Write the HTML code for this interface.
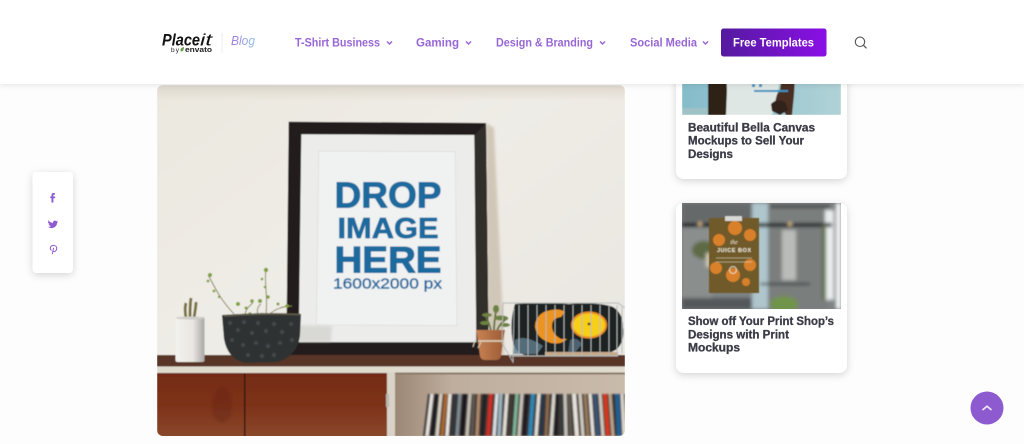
<!DOCTYPE html>
<html lang="en"><head><meta charset="utf-8"><title>Placeit Blog</title>
<style>
html,body{margin:0;padding:0;width:1024px;height:444px;overflow:hidden;background:#fdfdfd}
svg{display:block;font-family:"Liberation Sans",sans-serif}
.n{font-size:11.5px;font-weight:700;fill:#9767d6}
.t{font-size:11.5px;font-weight:700;fill:#3b3b47;stroke:#3b3b47;stroke-width:.3px}
</style></head><body>
<svg xmlns="http://www.w3.org/2000/svg" width="1024" height="444" viewBox="0 0 1024 444">
<defs>
<filter id="s" x="-30%" y="-30%" width="160%" height="160%"><feDropShadow dx="0" dy="2" stdDeviation="4" flood-color="#000" flood-opacity=".16"/></filter>
<filter id="h" x="-5%" y="-20%" width="110%" height="150%"><feDropShadow dx="0" dy="1" stdDeviation="3" flood-color="#000" flood-opacity=".1"/></filter>
<filter id="b3"><feGaussianBlur stdDeviation="1.800"/></filter>
<filter id="b1"><feGaussianBlur stdDeviation="1.400"/></filter>
<filter id="b6"><feGaussianBlur stdDeviation=".7"/></filter>
<filter id="b"><feGaussianBlur stdDeviation=".45"/></filter>
<linearGradient id="wall" x1="0" y1="0" x2="1" y2="1"><stop offset="0" stop-color="#ebe8df"/><stop offset=".4" stop-color="#efece6"/><stop offset="1" stop-color="#e8e5e0"/></linearGradient>
<linearGradient id="wt" x1="0" y1="0" x2="0" y2="1"><stop offset="0" stop-color="#ded8cd"/><stop offset="1" stop-color="#ded8cd" stop-opacity="0"/></linearGradient>
<linearGradient id="btn" x1="0" y1="0" x2="1" y2="0"><stop offset="0" stop-color="#541a9e"/><stop offset="1" stop-color="#8a0fe6"/></linearGradient>
<linearGradient id="blog" x1="0" y1="0" x2="1" y2="0"><stop offset="0" stop-color="#a678dc"/><stop offset="1" stop-color="#8fc4f0"/></linearGradient>
<linearGradient id="wood" x1="0" y1="0" x2="0" y2="1"><stop offset="0" stop-color="#752c14"/><stop offset=".5" stop-color="#7d3219"/><stop offset="1" stop-color="#8a482b"/></linearGradient>
<linearGradient id="inner" x1="0" y1="0" x2="1" y2="0"><stop offset="0" stop-color="#9c8775"/><stop offset=".25" stop-color="#bfae9e"/><stop offset="1" stop-color="#c9bbab"/></linearGradient>
<linearGradient id="can" x1="0" y1="0" x2="1" y2="0"><stop offset="0" stop-color="#f4f2ee"/><stop offset=".6" stop-color="#e9e6e2"/><stop offset="1" stop-color="#aaa8a4"/></linearGradient>
<linearGradient id="terra" x1="0" y1="0" x2="1" y2="0"><stop offset="0" stop-color="#c98355"/><stop offset="1" stop-color="#9b5a34"/></linearGradient>
<linearGradient id="sea" x1="0" y1="0" x2="1" y2="0"><stop offset="0" stop-color="#85bccb"/><stop offset="1" stop-color="#b0d2d6"/></linearGradient>
<clipPath id="mc"><rect x="157" y="85" width="468" height="351" rx="6"/></clipPath>
<clipPath id="c1"><rect x="682" y="60" width="159" height="55"/></clipPath>
<clipPath id="c2"><rect x="682" y="203" width="159" height="106"/></clipPath>
</defs>

<rect width="1024" height="444" fill="#fdfdfd"/>

<!-- main image -->
<g clip-path="url(#mc)"><g filter="url(#b)">
<rect x="157" y="85" width="468" height="351" fill="url(#wall)"/>
<rect x="157" y="85" width="468" height="16" fill="url(#wt)"/>
<polygon points="486,123 494,128 504,340 504,355 488,355" fill="#cbbfae" opacity=".8" filter="url(#b1)"/>
<!-- frame -->
<polygon points="288.700,121.700 486,123 488.700,355 286.300,355" fill="#211e1c"/>
<polygon points="474.300,135 486,123 488.700,355 476.300,342.300" fill="#302d2a"/>
<polygon points="301.300,134.300 474.300,135 476.300,342.300 298.700,342.300" fill="#ecedea"/>
<polygon points="318.700,151 455.300,151.700 457,325.700 316.300,325" fill="#f0f1f1" stroke="#d8d8d6" stroke-width=".6"/>
<polygon points="299,325 332,326 331,342 299,342" fill="#c9c8c5" opacity=".55" filter="url(#b1)"/>
<g fill="#1f6a9e" stroke="#1f6a9e" font-weight="700">
<text x="334.500" y="207.500" font-size="36" stroke-width=".9" textLength="107" lengthAdjust="spacingAndGlyphs">DROP</text>
<text x="337.500" y="238" font-size="29" stroke-width=".7" textLength="101" lengthAdjust="spacingAndGlyphs">IMAGE</text>
<text x="334.500" y="272.500" font-size="37" stroke-width="1.100" textLength="107" lengthAdjust="spacingAndGlyphs">HERE</text>
<text x="333" y="288.500" font-size="15" font-weight="400" stroke-width=".4" textLength="109" lengthAdjust="spacingAndGlyphs">1600x2000 px</text>
</g>
<!-- shelf -->
<rect x="157" y="355" width="468" height="12" fill="#593527"/>
<rect x="157" y="366.500" width="468" height="6" fill="#dfdbcf"/>
<rect x="157" y="372.500" width="468" height="64" fill="#d8d3c6"/>
<rect x="157" y="373" width="87" height="64" fill="url(#wood)"/>
<rect x="245.500" y="373" width="141.500" height="64" fill="url(#wood)"/>
<rect x="244" y="373" width="1.500" height="64" fill="#2e1509"/>
<ellipse cx="222" cy="405" rx="10" ry="18" fill="#5e2412" opacity=".3" filter="url(#b1)"/>
<rect x="386" y="394" width="3" height="13" fill="#b9b8b0"/>
<rect x="395" y="372.500" width="230" height="64" fill="url(#inner)"/>
<rect x="395" y="372.500" width="230" height="2" fill="#8b7968"/>
<!-- books -->
<g filter="url(#b6)">
<polygon points="423,436 428,394 625,394 625,436" fill="#3a3230"/>
<g stroke-width="3.200">
<path d="M427 436l5-42" stroke="#e8e6e0"/><path d="M432 436l5-42" stroke="#1f1f22"/><path d="M437 436l4-42" stroke="#d9d3c4"/><path d="M442 436l4-42" stroke="#b0692c"/><path d="M447 436l3-42" stroke="#ece9e2"/><path d="M452 436l4-42" stroke="#30343a"/><path d="M457 436l3-42" stroke="#7f8d92"/><path d="M462 436l3-42" stroke="#17191c"/><path d="M467 436l3-42" stroke="#c5c0b5"/><path d="M472 436l2-42" stroke="#5d5750"/><path d="M477 436l2-42" stroke="#b08a6c"/><path d="M482 436l3-42" stroke="#202226"/><path d="M488 436l3-42" stroke="#cf2d22" stroke-width="4"/><path d="M494 436l3-42" stroke="#dfe3e6"/><path d="M499 436l2-42" stroke="#9fb8c4"/><path d="M504 436l3-42" stroke="#e6e2da"/><path d="M509 436l2-42" stroke="#403a34"/><path d="M514 436l3-42" stroke="#7fb69a"/><path d="M519 436l3-42" stroke="#c9c4ba"/><path d="M524 436l3-42" stroke="#1a1c20"/><path d="M530 436l3-42" stroke="#2f86b2" stroke-width="4"/><path d="M536 436l3-42" stroke="#e4e0d8"/><path d="M541 436l2-42" stroke="#26384a"/><path d="M546 436l2-42" stroke="#8a6a4e"/><path d="M551 436l3-42" stroke="#dcd8d0"/><path d="M556 436l1-42" stroke="#1d1e20"/><path d="M561 436l0-42" stroke="#383a3a"/><path d="M566 436l-1-42" stroke="#c9c4bb"/><path d="M571 436l-2-42" stroke="#5f5a52"/><path d="M577 436l-3-42" stroke="#e8e5de" stroke-width="4"/><path d="M583 436l-3-42" stroke="#d3cec4"/><path d="M588 436l-3-42" stroke="#9a7a5c"/><path d="M593 436l-3-42" stroke="#e6e4dc"/><path d="M598 436l-3-42" stroke="#38567a"/><path d="M603 436l-3-42" stroke="#cfcabf"/><path d="M608 436l-3-42" stroke="#d8391f" stroke-width="4"/><path d="M613 436l-3-42" stroke="#b9a48c"/><path d="M619 436l-2-42" stroke="#1f6294" stroke-width="4"/><path d="M624 436l-2-42" stroke="#dbd7cf"/>
</g>
</g>
<!-- can -->
<path d="M186 318c-1-6-1-12 0-15M190 318c0-8 0-14 1-20M194 318c1-6 2-12 2-16" stroke="#77703f" stroke-width="2.800" fill="none"/>
<rect x="175.500" y="317" width="29" height="45" rx="2" fill="url(#can)"/>
<ellipse cx="190" cy="318" rx="14.500" ry="1.500" fill="#cfcdc8"/>
<!-- plant -->
<g fill="none" stroke="#7b7a4c" stroke-width=".9">
<path d="M208 275c5 8 10 22 26 39"/><path d="M266 268c-2 14 2 30 0 46"/><path d="M245 314c2-8 6-8 8-12M258 314c-2-4 1-9 3-10M270 314c4-4 12-8 22-8"/>
</g>
<g fill="#7ea03f">
<circle cx="210" cy="275" r="2"/><circle cx="208" cy="281" r="1.400"/><circle cx="214" cy="291" r="1.400"/><circle cx="219" cy="297" r="1.200"/><circle cx="238" cy="304" r="2"/><circle cx="246" cy="308" r="1.500"/><circle cx="266" cy="270" r="2.200"/><circle cx="262" cy="279" r="1.300"/><circle cx="265" cy="287" r="1.300"/><circle cx="252" cy="301" r="1.800"/><circle cx="260" cy="301" r="2"/><circle cx="268" cy="297" r="1.800"/><circle cx="278" cy="304" r="1.500"/><circle cx="287" cy="306" r="1.800"/><circle cx="250" cy="314" r="1.800"/><circle cx="262" cy="315" r="2.200"/>
</g>
<!-- pot -->
<path d="M222 315q40-3 79-1l-1 22q-3 20-22 26l-32 1q-18-3-22-24z" fill="#2e3133"/>
<path d="M224 316q37-3 76-1.500" stroke="#5e5a48" stroke-width="1.800" fill="none"/>
<g filter="url(#b6)" fill="#4d5154"><circle cx="230" cy="323" r="1.800"/><circle cx="238" cy="330" r="1.800"/><circle cx="244" cy="322" r="1.800"/><circle cx="252" cy="333" r="1.800"/><circle cx="258" cy="323" r="1.800"/><circle cx="266" cy="331" r="1.800"/><circle cx="274" cy="324" r="1.800"/><circle cx="282" cy="332" r="1.800"/><circle cx="291" cy="324" r="1.800"/><circle cx="232" cy="340" r="1.800"/><circle cx="243" cy="345" r="1.800"/><circle cx="256" cy="343" r="1.800"/><circle cx="268" cy="346" r="1.800"/><circle cx="280" cy="343" r="1.800"/><circle cx="292" cy="340" r="1.800"/><circle cx="248" cy="355" r="1.800"/><circle cx="262" cy="356" r="1.800"/><circle cx="274" cy="355" r="1.800"/></g>
<!-- terracotta -->
<path d="M491 331c-1-6-3-10-5-14M494 331c0-8 1-14 2-20M497 331c2-6 5-9 11-13" stroke="#64703f" stroke-width="1.800" fill="none"/>
<g fill="#6d8243"><ellipse cx="487" cy="315" rx="5" ry="2"/><ellipse cx="501" cy="318" rx="7" ry="2.500"/><ellipse cx="485" cy="323" rx="5" ry="2"/><ellipse cx="496" cy="309" rx="3" ry="4"/><ellipse cx="505" cy="325" rx="5" ry="2"/></g>
<path d="M476 330h29l-1 5-3 21q-1 4-5 4h-11q-4 0-5-4l-3-21z" fill="url(#terra)"/>
<path d="M478 341h26" stroke="#d9ccb4" stroke-width="1.800"/>
<path d="M475 340l-2 7M481 342l-3 6" stroke="#d9ccb4" stroke-width="1"/>
<!-- records -->
<path d="M515 304q30-2 54 0q30-2 44 3q10 6 10 20q2 14-6 22q-10 7-30 6h-60q-10 0-14-12q-4-20 2-39z" fill="#1f2024"/>
<path d="M515 340q10-6 28 6l-6 8h-24z" fill="#5f7f90" opacity=".8"/>
<path d="M570 340q6-4 12 4l-8 10h-6z" fill="#5f7f90" opacity=".7"/>
<path d="M544 312q14-5 21 0l-4 5q-9 1-9 9 0 8 9 13l6 0q-6 6-16 4-14-4-16-16 0-10 9-15z" fill="#ec9422"/>
<ellipse cx="589" cy="325" rx="17" ry="12.500" fill="#f6cf15" stroke="#ee9020" stroke-width="2"/>
<circle cx="589" cy="324" r="1.400" fill="#54401c"/>
<rect x="545" y="352" width="73" height="4" fill="#c6a98a"/>
<g stroke="#b4b8b5" stroke-width=".9" fill="none">
<path d="M503 303h115l7 5M503 303l-1 40 11 19 1-54M622 307v46"/>
<path d="M519 305v51M528 305v51M537 305v51M546 305v51M555 305v51M564 305v51M573 305v51M582 305v51M591 305v51M600 305v51M609 305v51M617 305v51"/>
<path d="M510 356h108"/>
</g>
</g></g>

<!-- card 1 -->
<rect x="676" y="40" width="171" height="139" rx="8" fill="#fff" filter="url(#s)"/>
<g clip-path="url(#c1)"><g filter="url(#b)">
<rect x="682" y="60" width="159" height="55" fill="url(#sea)"/>
<path d="M708 60h18l1 30v25h-19z" fill="#2d2019"/>
<path d="M796 60h-12l-4 30-8 12 8 2 6 11h6l2-20z" fill="#4a2f22"/>
<path d="M726 60h58l-6 30 -6 25h-46l1-25z" fill="#dfe7e5"/>
<g fill="#3e92c0"><rect x="752" y="84" width="3" height="3"/><rect x="759" y="84" width="3" height="3"/><rect x="754" y="90" width="34" height="2"/></g>
<path d="M771 104q6-6 14-2l3 8-8 5-8-4z" fill="#33211a"/>
<path d="M682 108h26v7h-26z" fill="#9ec2c6"/>
</g></g>
<text class="t"><tspan x="688" y="131.500" textLength="127" lengthAdjust="spacingAndGlyphs">Beautiful Bella Canvas</tspan><tspan x="688" y="144.500" textLength="116" lengthAdjust="spacingAndGlyphs">Mockups to Sell Your</tspan><tspan x="688" y="158" textLength="45" lengthAdjust="spacingAndGlyphs">Designs</tspan></text>

<!-- card 2 -->
<rect x="676" y="203" width="171" height="170" rx="8" fill="#fff" filter="url(#s)"/>
<g clip-path="url(#c2)">
<rect x="682" y="203" width="159" height="106" fill="#7e8384"/>
<g filter="url(#b3)">
<rect x="682" y="203" width="70" height="24" fill="#66696a"/>
<rect x="682" y="228" width="30" height="81" fill="#8a8e8d"/>
<rect x="682" y="298" width="90" height="11" fill="#55595a"/>
<rect x="752" y="203" width="16" height="106" fill="#afc6cd"/>
<rect x="768" y="203" width="60" height="106" fill="#7a7e7d"/>
<rect x="782" y="230" width="14" height="50" fill="#b9bcb9"/>
<rect x="825" y="210" width="9" height="90" fill="#e8ecec"/>
<rect x="836" y="203" width="5" height="106" fill="#fbfbfb"/>
<rect x="682" y="223" width="150" height="4" fill="#1f2223"/>
<rect x="760" y="283" width="50" height="2" fill="#2e3030"/>
<rect x="770" y="205" width="60" height="3" fill="#3f4242"/>
<ellipse cx="704" cy="250" rx="12" ry="9" fill="#5d6b45"/>
<rect x="706" y="253" width="8" height="14" fill="#cfc8b5"/>
<ellipse cx="784" cy="304" rx="14" ry="8" fill="#6f9448"/>
<rect x="822" y="225" width="4" height="75" fill="#5e6e4c"/>
<circle cx="790" cy="224" r="2" fill="#e0bc84"/><circle cx="700" cy="224" r="2" fill="#e0bc84"/>
</g>
<g filter="url(#b)">
<rect x="709" y="218" width="50" height="75" fill="#6f5a2a"/>
<g fill="#d9812a"><circle cx="719" cy="240" r="6"/><circle cx="735" cy="228" r="7"/><circle cx="750" cy="235" r="6"/><circle cx="716" cy="268" r="6"/><circle cx="733" cy="275" r="7"/><circle cx="750" cy="265" r="6"/><circle cx="746" cy="282" r="4"/></g>
<rect x="725" y="216" width="17" height="5" fill="#d8d8d4"/>
<text x="734" y="244" font-size="6" font-style="italic" fill="#f0e8d4" text-anchor="middle" font-family="Liberation Serif">the</text>
<text x="734" y="252" font-size="5.500" font-weight="700" fill="#f4eedd" text-anchor="middle" textLength="34">JUICE BOX</text>
<path d="M716 258h36M716 262h36" stroke="#e8dcbc" stroke-width=".5"/>
<circle cx="733" cy="270" r="3.500" fill="none" stroke="#f0e8d4" stroke-width=".8"/>
</g>
</g>
<text class="t"><tspan x="688" y="325" textLength="146" lengthAdjust="spacingAndGlyphs">Show off Your Print Shop’s</tspan><tspan x="688" y="338.500" textLength="101" lengthAdjust="spacingAndGlyphs">Designs with Print</tspan><tspan x="688" y="351.500" textLength="52" lengthAdjust="spacingAndGlyphs">Mockups</tspan></text>

<!-- header -->
<rect x="0" y="0" width="1024" height="84" fill="#fff" filter="url(#h)"/>
<text x="162" y="45.500" font-size="17" font-weight="700" font-style="italic" fill="#111" textLength="38" lengthAdjust="spacingAndGlyphs">Place</text>
<text x="200" y="45.500" font-size="17" font-style="italic" fill="#111" textLength="12" lengthAdjust="spacingAndGlyphs">it</text>
<text x="171" y="52" font-size="6.500" fill="#222" textLength="8">by</text>
<path d="M181 51.500c-1.500-2 .5-4 3-4.500-.2 2.500-.8 4.500-3 4.500z" fill="#5f9e3a"/>
<text x="185" y="52" font-size="7.500" font-weight="700" fill="#222" textLength="27" lengthAdjust="spacingAndGlyphs">envato</text>
<rect x="221.500" y="33" width="1" height="20" fill="#eeeeee"/>
<text x="231" y="45" font-size="12.500" font-style="italic" fill="url(#blog)" textLength="24" lengthAdjust="spacingAndGlyphs">Blog</text>

<text class="n" x="295" y="46.500" textLength="85" lengthAdjust="spacingAndGlyphs">T-Shirt Business</text>
<text class="n" x="416" y="46.500" textLength="43" lengthAdjust="spacingAndGlyphs">Gaming</text>
<text class="n" x="496" y="46.500" textLength="97" lengthAdjust="spacingAndGlyphs">Design &amp; Branding</text>
<text class="n" x="630" y="46.500" textLength="67" lengthAdjust="spacingAndGlyphs">Social Media</text>
<g fill="none" stroke="#9767d6" stroke-width="1.500"><path d="M387 41.500l2.500 2.500 2.500-2.500"/><path d="M466 41.500l2.500 2.500 2.500-2.500"/><path d="M600 41.500l2.500 2.500 2.500-2.500"/><path d="M703 41.500l2.500 2.500 2.500-2.500"/></g>

<rect x="721" y="28.500" width="105.500" height="28" rx="2.500" fill="url(#btn)"/>
<text x="733" y="46.500" font-size="11.500" font-weight="700" fill="#fff" textLength="81" lengthAdjust="spacingAndGlyphs">Free Templates</text>
<circle cx="860" cy="41.800" r="4.700" fill="none" stroke="#555" stroke-width="1.100"/><path d="M863.500 45.300l3 3" stroke="#555" stroke-width="1.200"/>

<!-- share -->
<rect x="32.500" y="172" width="40.500" height="101" rx="4" fill="#fff" filter="url(#s)"/>
<path d="M54.800 193h-1.300q-2 0-2 2v1.500h-1.300v1.800h1.300v4.200h1.900v-4.200h1.600l.3-1.800h-1.900v-1.100q0-.6.6-.6h.8z" fill="#8e5bd0"/>
<path d="M48.500 220.500q2 2.300 4.500 2.400c-.3-2 2.100-3.100 3.400-1.700l1.500-.5-.9 1.400 1-.2-1 1.100c.1 3.500-4.500 7-9 3.900q1.800.1 3-.9-2-.4-2.300-1.900h1q-1.800-.7-1.800-2.300l1 .3q-1.300-1.100-.4-2.600z" fill="#8e5bd0"/>
<path d="M51.500 250.500c-1.600-1-1.500-3.200-.4-4.200 1.800-1.600 5.300-.9 5.600 1.500.2 2-1 4-2.800 3.800-.8-.1-1.200-.6-1.200-.6m.9-3.100l-1.300 6.300" fill="none" stroke="#8e5bd0" stroke-width="1"/>

<!-- back to top -->
<circle cx="987" cy="408" r="16.500" fill="#8d5bcf"/>
<path d="M982.500 410l4.500-3.800 4.500 3.800" fill="none" stroke="#eee6f8" stroke-width="1.700"/>
</svg>
</body></html>
